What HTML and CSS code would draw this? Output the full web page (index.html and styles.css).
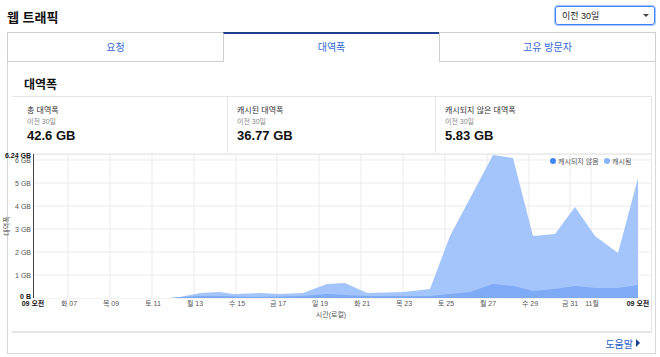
FILE: index.html
```html
<!DOCTYPE html>
<html lang="ko">
<head>
  <meta charset="UTF-8" />
  <title>웹 트래픽</title>
  <link rel="stylesheet" href="styles.css">
</head>
<body>

  <header class="top">
    <h1>웹 트래픽</h1>
    <div class="select">
      <span>이전 30일</span>
      <span class="caret"></span>
    </div>
  </header>

  <div class="card">
    <nav class="tabs">
      <a class="tab">요청</a>
      <a class="tab active">대역폭</a>
      <a class="tab">고유 방문자</a>
    </nav>

    <div class="panel">
      <h2>대역폭</h2>

      <!-- Stats -->
      <div class="stats">
        <div class="stat">
          <div class="label">총 대역폭</div>
          <div class="sub">이전 30일</div>
          <div class="value">42.6 GB</div>
        </div>
        <div class="stat">
          <div class="label">캐시된 대역폭</div>
          <div class="sub">이전 30일</div>
          <div class="value">36.77 GB</div>
        </div>
        <div class="stat">
          <div class="label">캐시되지 않은 대역폭</div>
          <div class="sub">이전 30일</div>
          <div class="value">5.83 GB</div>
        </div>
      </div>

      <!-- Chart -->
      <div class="chart">
        <svg width="648" height="177" viewBox="4 152 648 177">
          <g class="grid">
            <line x1="33" y1="153.5" x2="652" y2="153.5"/>
            <line x1="33" y1="159" x2="652" y2="159"/>
            <line x1="33" y1="182" x2="652" y2="182"/>
            <line x1="33" y1="205" x2="652" y2="205"/>
            <line x1="33" y1="228" x2="652" y2="228"/>
            <line x1="33" y1="251" x2="652" y2="251"/>
            <line x1="33" y1="274" x2="652" y2="274"/>
            <line x1="68" y1="153" x2="68" y2="297"/>
            <line x1="110" y1="153" x2="110" y2="297"/>
            <line x1="152" y1="153" x2="152" y2="297"/>
            <line x1="194" y1="153" x2="194" y2="297"/>
            <line x1="236" y1="153" x2="236" y2="297"/>
            <line x1="277" y1="153" x2="277" y2="297"/>
            <line x1="319" y1="153" x2="319" y2="297"/>
            <line x1="361" y1="153" x2="361" y2="297"/>
            <line x1="403" y1="153" x2="403" y2="297"/>
            <line x1="445" y1="153" x2="445" y2="297"/>
            <line x1="487" y1="153" x2="487" y2="297"/>
            <line x1="529" y1="153" x2="529" y2="297"/>
            <line x1="570" y1="153" x2="570" y2="297"/>
            <line x1="591" y1="153" x2="591" y2="297"/>
          </g>

          <polygon class="cached" points="33,297 170,297 180,296 200,292 220,291 233,293 260,292 280,293 303,292 327,283 345,282 367,292 403,291 430,288 450,235 493,154 513,157 533,235 555,233 575,206 595,235 618,252 638,177 638,297"/>
          <polygon class="uncached" points="170,297 180,296 200,295 220,295 260,296 303,295 327,293 345,294 367,295 403,295 430,295 450,293 470,291 493,283 513,285 533,290 555,288 575,285 595,287 618,287 638,284 638,297"/>

          <line class="axis" x1="33.5" y1="153" x2="33.5" y2="297"/>
          <line class="axis-x" x1="33" y1="297.5" x2="640" y2="297.5"/>

          <g class="ylabels">
            <text x="31" y="157" class="strong">6.24 GB</text>
            <text x="31" y="162">6 GB</text>
            <text x="31" y="184.5">5 GB</text>
            <text x="31" y="207.5">4 GB</text>
            <text x="31" y="230.5">3 GB</text>
            <text x="31" y="253.5">2 GB</text>
            <text x="31" y="276.5">1 GB</text>
            <text x="31" y="298" class="strong">0 B</text>
          </g>
          <text class="ytitle" transform="translate(9,225) rotate(-90)">대역폭</text>

          <g class="xlabels">
            <text x="33" y="305" class="strong">09 오전</text>
            <text x="69" y="305">화 07</text>
            <text x="111" y="305">목 09</text>
            <text x="153" y="305">토 11</text>
            <text x="195" y="305">월 13</text>
            <text x="237" y="305">수 15</text>
            <text x="278" y="305">금 17</text>
            <text x="320" y="305">일 19</text>
            <text x="362" y="305">화 21</text>
            <text x="404" y="305">목 23</text>
            <text x="446" y="305">토 25</text>
            <text x="488" y="305">월 27</text>
            <text x="530" y="305">수 29</text>
            <text x="570" y="305">금 31</text>
            <text x="592" y="305">11월</text>
            <text x="638" y="305" class="strong">09 오전</text>
          </g>
          <text class="xtitle" x="331" y="316">시간(로컬)</text>

          <g class="legend">
            <circle cx="553" cy="160" r="3" fill="#4285f4"/>
            <text x="558" y="162.5">캐시되지 않음</text>
            <circle cx="607" cy="160" r="3" fill="#8ab4f8"/>
            <text x="612" y="162.5">캐시됨</text>
          </g>
        </svg>
      </div>
    </div>

    <div class="footer">
      <a class="help">도움말 <span class="arrow"></span></a>
    </div>
  </div>

</body>
</html>
```

FILE: styles.css
```css
body {
  margin: 0;
  font-family: "Liberation Sans", "Noto Sans CJK KR", sans-serif;
  color: #222;
  background: #fff;
}

/* Header */
.top {
  display: flex;
  justify-content: space-between;
  align-items: center;
  height: 32px;
  padding: 0 5px 0 7px;
  box-sizing: border-box;
}

.top h1 {
  margin: 0;
  font-size: 13px;
  font-weight: bold;
  color: #111;
}

.select {
  display: flex;
  justify-content: space-between;
  align-items: center;
  width: 100px;
  height: 19px;
  margin-top: -2px;
  padding: 0 5px 0 6px;
  box-sizing: border-box;
  border: 1px solid #3b82f6;
  border-radius: 3px;
  box-shadow: 0 0 0 1px #a8c7fa;
  font-size: 9px;
  color: #222;
}

.caret {
  width: 0;
  height: 0;
  border-left: 3px solid transparent;
  border-right: 3px solid transparent;
  border-top: 3px solid #444;
}

/* Card */
.card {
  margin: 0 4px 0 7px;
  border: 1px solid #d8d8d8;
  border-top: none;
}

.tabs {
  display: flex;
  margin: 0 -1px;
}

.tab {
  flex: 1;
  height: 30px;
  line-height: 30px;
  text-align: center;
  font-size: 10px;
  color: #3569d4;
  border: 1px solid #cfcfcf;
  box-sizing: border-box;
}

.tab + .tab {
  margin-left: -1px;
}

.tab.active {
  border-top: 2px solid #1d3f8f;
  border-bottom-color: transparent;
  line-height: 28px;
}

.panel {
  padding: 0 3px 0 4px;
}

.panel h2 {
  margin: 0;
  padding: 13px 0 0 12px;
  height: 34px;
  box-sizing: border-box;
  font-size: 12px;
  font-weight: bold;
  color: #111;
}

/* Stats */
.stats {
  display: grid;
  grid-template-columns: 215px 208px 1fr;
  height: 56px;
  border-top: 1px solid #e6e6e6;
  border-right: 1px solid #e6e6e6;
}

.stat {
  padding: 8px 0 0 9px;
  border-left: 1px solid #e6e6e6;
}

.stat:first-child {
  padding-left: 15px;
  border-left: none;
}

.stat .label {
  font-size: 8px;
  color: #333;
  line-height: 11px;
}

.stat .sub {
  font-size: 7px;
  color: #888;
  line-height: 11px;
}

.stat .value {
  font-size: 13px;
  font-weight: bold;
  color: #111;
  line-height: 16px;
  margin-top: 1px;
}

/* Chart */
.chart {
  height: 177px;
  border-top: 1px solid #f0f0f0;
  border-right: 1px solid #e6e6e6;
  border-bottom: 2px solid #e6e6e6;
}

.chart svg {
  display: block;
  overflow: visible;
  margin: -1px 0 0 -8px;
}

.chart text {
  font-family: "Liberation Sans", "Noto Sans CJK KR", sans-serif;
  font-size: 7px;
  fill: #555;
}

.chart .strong {
  font-weight: bold;
  fill: #111;
}

.grid line {
  stroke: #ebebeb;
  stroke-width: 1;
}

.cached {
  fill: #a3c5fb;
}

.uncached {
  fill: #7eaaf6;
}

.axis {
  stroke: #444;
  stroke-width: 1;
}

.axis-x {
  stroke: #f2f2f2;
}

.ylabels text {
  text-anchor: end;
}

.xlabels text {
  text-anchor: middle;
}

.ytitle {
  text-anchor: middle;
}

.xtitle {
  text-anchor: middle;
}

/* Footer */
.footer {
  height: 20px;
  display: flex;
  justify-content: flex-end;
  align-items: center;
  padding-right: 15px;
}

.help {
  font-size: 10px;
  color: #2a5fc4;
  display: flex;
  align-items: center;
  gap: 3px;
}

.arrow {
  width: 0;
  height: 0;
  border-top: 4px solid transparent;
  border-bottom: 4px solid transparent;
  border-left: 4px solid #1d3f8f;
}
```
